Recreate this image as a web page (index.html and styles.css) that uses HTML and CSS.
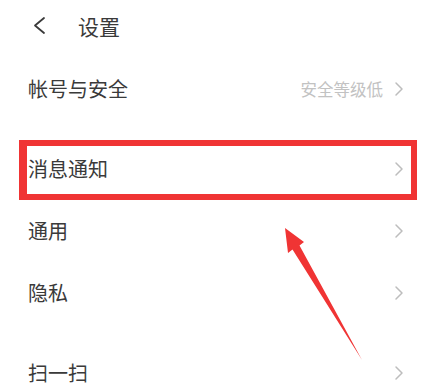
FILE: index.html
```html
<!DOCTYPE html>
<html lang="zh">
<head>
<meta charset="utf-8">
<link rel="stylesheet" href="styles.css">
</head>
<body>
<div class="page">
  <header class="header">
    <svg class="back" width="14" height="20" viewBox="0 0 14 20"><polyline points="11,2 2,9.5 11,17" fill="none" stroke="#3a3a3a" stroke-width="1.8" stroke-linecap="round" stroke-linejoin="round"/></svg>
    <span class="title">设置</span>
  </header>
  <div class="group first">
    <div class="row"><span class="label">帐号与安全</span><span class="right"><span class="value">安全等级低</span><svg class="chev" width="10" height="16" viewBox="0 0 10 16"><polyline points="2,2 8,8 2,14" fill="none" stroke="#bdbdbd" stroke-width="1.5" stroke-linecap="round" stroke-linejoin="round"/></svg></span></div>
  </div>
  <div class="group">
    <div class="row"><span class="label">消息通知</span><span class="right"><svg class="chev" width="10" height="16" viewBox="0 0 10 16"><polyline points="2,2 8,8 2,14" fill="none" stroke="#bdbdbd" stroke-width="1.5" stroke-linecap="round" stroke-linejoin="round"/></svg></span><div class="highlight"></div></div>
    <div class="row"><span class="label">通用</span><span class="right"><svg class="chev" width="10" height="16" viewBox="0 0 10 16"><polyline points="2,2 8,8 2,14" fill="none" stroke="#bdbdbd" stroke-width="1.5" stroke-linecap="round" stroke-linejoin="round"/></svg></span></div>
    <div class="row"><span class="label">隐私</span><span class="right"><svg class="chev" width="10" height="16" viewBox="0 0 10 16"><polyline points="2,2 8,8 2,14" fill="none" stroke="#bdbdbd" stroke-width="1.5" stroke-linecap="round" stroke-linejoin="round"/></svg></span></div>
  </div>
  <div class="group">
    <div class="row"><span class="label">扫一扫</span><span class="right"><svg class="chev" width="10" height="16" viewBox="0 0 10 16"><polyline points="2,2 8,8 2,14" fill="none" stroke="#bdbdbd" stroke-width="1.5" stroke-linecap="round" stroke-linejoin="round"/></svg></span></div>
  </div>
  <svg class="arrow" width="430" height="392" viewBox="0 0 430 392"><polygon points="285,228 304,242 299.5,245.5 362,360 292.5,249.5 288,253" fill="#f03434"/></svg>
</div>
</body>
</html>
```
FILE: styles.css
```css
* { box-sizing: border-box; }
html, body { margin: 0; padding: 0; background: #fff; }
.page {
  position: relative;
  width: 430px;
  height: 392px;
  overflow: hidden;
  font-family: "Noto Sans CJK SC", "Noto Sans", sans-serif;
  color: #3a3a3a;
}
.header {
  height: 52px;
  display: flex;
  align-items: center;
  padding-left: 33px;
}
.back { display: block; margin-right: 31px; }
.title { font-size: 21px; line-height: 1; }
.group { margin-top: 18px; }
.group.first { margin-top: 6px; }
.row {
  position: relative;
  height: 62px;
  display: flex;
  align-items: center;
  justify-content: space-between;
  padding: 0 26px 0 28px;
}
.label { font-size: 20px; line-height: 1; }
.right { display: flex; align-items: center; gap: 11px; }
.value { font-size: 16.5px; color: #c2c2c2; line-height: 1; }
.chev { display: block; }
.highlight {
  position: absolute;
  left: 19px;
  right: 13px;
  top: 2px;
  bottom: 0;
  border: 6px solid #f03434;
  border-left-width: 8px;
}
.arrow { position: absolute; left: 0; top: 0; }
```
